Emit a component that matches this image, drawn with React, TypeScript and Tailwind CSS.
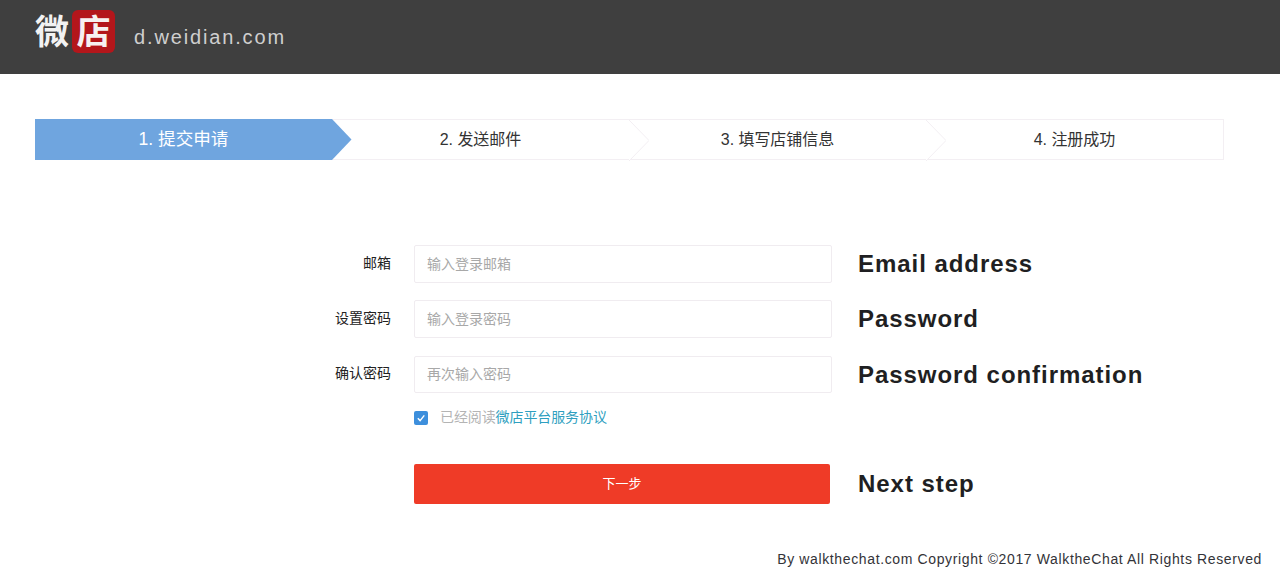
const font = { fontFamily: '"Liberation Sans", "Noto Sans CJK SC", sans-serif' };

function Chevron({ active }: { active?: boolean }) {
  return (
    <svg className="absolute top-0 right-[-20px] z-10" width="20" height="41" viewBox="0 0 20 41">
      {active ? (
        <path d="M0 0 L19.5 20.5 L0 41 Z" fill="#6fa5df" />
      ) : (
        <>
          <path d="M0 0 L20 20.5 L0 41 Z" fill="#ffffff" />
          <path d="M0 0 L20 20.5 L0 41" fill="none" stroke="#f3eff3" strokeWidth="1" />
        </>
      )}
    </svg>
  );
}

function Step({ label, w, active, last }: { label: string; w: string; active?: boolean; last?: boolean }) {
  return (
    <div
      className={`relative flex h-[41px] items-center justify-center ${w} ${
        active ? "bg-[#6fa5df] text-[17.6px] text-white" : "border-y border-[#f3eff3] text-[16px] tracking-[-0.05px] text-[#333333]"
      } ${last ? "border-r" : ""}`}
    >
      <span className={active ? "pb-[1px]" : ""}>{label}</span>
      {!last && <Chevron active={active} />}
    </div>
  );
}

function Row({ label, placeholder, note, h }: { label: string; placeholder: string; note: string; h: string }) {
  return (
    <div className={`flex items-center ${h}`}>
      <label className="w-[391px] pb-[2px] text-right text-[14px] text-[#222222]">{label}</label>
      <input
        readOnly
        placeholder={placeholder}
        className={`ml-[23px] w-[418px] rounded-[2px] border border-[#f0ecf0] bg-white px-[12px] pb-[1px] text-[14px] placeholder:text-[#a8a8a8] ${h}`}
      />
      <span className="ml-[26px] text-[24px] font-bold tracking-[0.95px] text-[#1f1f22]">{note}</span>
    </div>
  );
}

export default function App() {
  return (
    <div className="h-[580px] w-[1280px] overflow-hidden bg-white" style={font}>
      <header className="flex h-[74px] items-start bg-[#3f3f3f] pl-[35px] pt-[10px]">
        <span className="mt-[1px] text-[34px] leading-[42px] font-bold text-[#f2f2f2]">微</span>
        <span className="ml-[3px] flex h-[43px] w-[43px] items-center justify-center rounded-[6px] bg-[#b3161b] text-[34px] leading-none font-bold text-[#f6f1f1]">
          店
        </span>
        <span className="ml-[19px] mt-[15px] text-[20px] leading-[24px] tracking-[1.85px] text-[#cfcfcf]">
          d.weidian.com
        </span>
      </header>

      <div className="ml-[35px] mt-[45px] flex w-[1189px]">
        <Step label="1. 提交申请" w="w-[297px]" active />
        <Step label="2. 发送邮件" w="w-[297px]" />
        <Step label="3. 填写店铺信息" w="w-[297px]" />
        <Step label="4. 注册成功" w="w-[298px]" last />
      </div>

      <form className="mt-[85px] flex flex-col">
        <Row h="h-[38px]" label="邮箱" placeholder="输入登录邮箱" note="Email address" />
        <div className="mt-[17px]">
          <Row h="h-[38px]" label="设置密码" placeholder="输入登录密码" note="Password" />
        </div>
        <div className="mt-[18px]">
          <Row h="h-[37px]" label="确认密码" placeholder="再次输入密码" note="Password confirmation" />
        </div>

        <div className="ml-[414px] mt-[14px] flex h-[20px] items-center">
          <span className="mt-[2px] flex h-[14px] w-[14px] items-center justify-center rounded-[2px] bg-[#3d8fdc]">
            <svg width="10" height="10" viewBox="0 0 10 10">
              <path d="M1.8 5.2 L4.1 7.6 L8.3 2.4" fill="none" stroke="#ffffff" strokeWidth="1.4" />
            </svg>
          </span>
          <span className="ml-[12px] text-[14px] tracking-[-0.1px] text-[#b4b4b4]">
            已经阅读<span className="text-[#2f9fc0]">微店平台服务协议</span>
          </span>
        </div>

        <div className="mt-[37px] flex items-center">
          <button
            type="button"
            className="ml-[414px] h-[40px] w-[416px] rounded-[2px] bg-[#ef3b27] text-[13px] text-white"
          >
            下一步
          </button>
          <span className="ml-[28px] text-[24px] font-bold tracking-[0.95px] text-[#1f1f22]">Next step</span>
        </div>
      </form>

      <footer className="mt-[45px] pr-[18px] text-right text-[14px] leading-[20px] tracking-[0.63px] text-[#333338]">
        By walkthechat.com Copyright ©2017 WalktheChat All Rights Reserved
      </footer>
    </div>
  );
}
